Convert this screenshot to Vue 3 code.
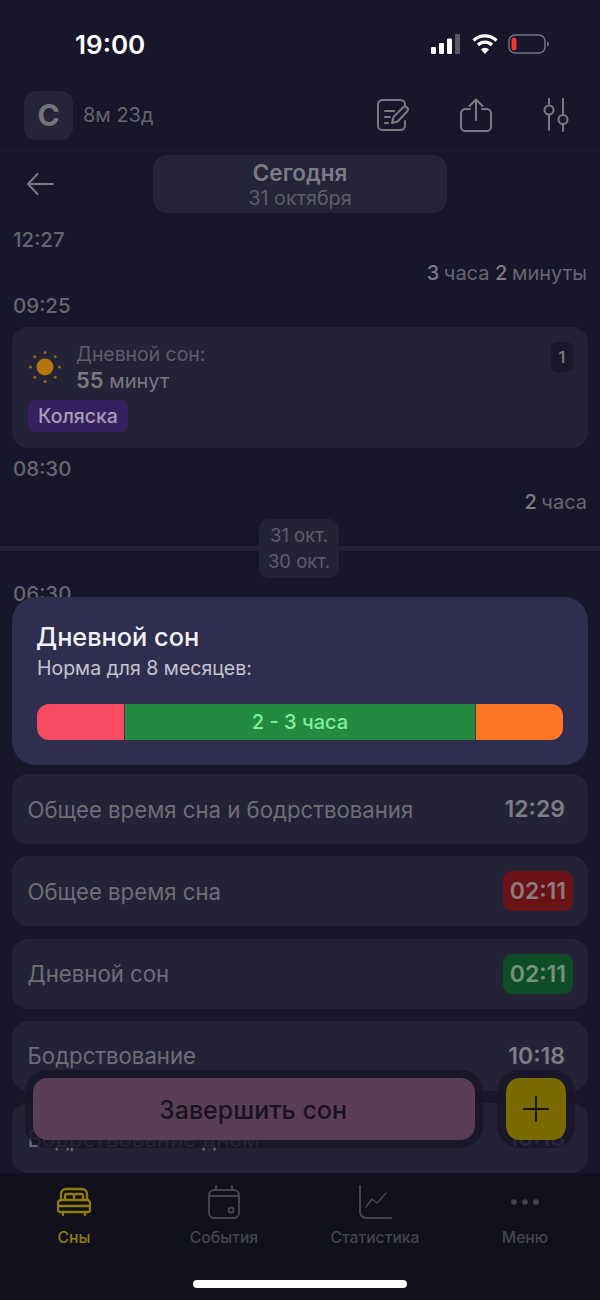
<template>
  <div class="screen">
    <div class="status-bar">
      <span class="clock">19:00</span>
      <div class="status-icons">
        <svg width="32" height="20" viewBox="0 0 32 20">
          <rect x="1" y="13" width="5" height="7" rx="1.2" fill="#fff" />
          <rect x="9" y="9" width="5" height="11" rx="1.2" fill="#fff" />
          <rect x="17" y="4.5" width="5" height="15.5" rx="1.2" fill="#fff" />
          <rect x="25" y="0" width="5" height="20" rx="1.2" fill="#5a5a64" />
        </svg>
        <svg width="26" height="20" viewBox="0 0 26 20">
          <path d="M1.5 6.5a16.5 16.5 0 0 1 23 0" fill="none" stroke="#fff" stroke-width="3.2" />
          <path d="M6 11a10 10 0 0 1 14 0" fill="none" stroke="#fff" stroke-width="3.2" />
          <path d="M13 20l-4-4.6a5.6 5.6 0 0 1 8 0z" fill="#fff" />
        </svg>
        <svg width="42" height="20" viewBox="0 0 42 20">
          <rect x="1" y="1" width="36" height="18" rx="6" fill="none" stroke="#77767f" stroke-width="1.4" />
          <rect x="3.5" y="3.5" width="5" height="13" rx="2.5" fill="#f0352b" />
          <path d="M39 7.5c1.4.4 2 1.300 2 2.500s-.6 2.100-2 2.500z" fill="#77767f" />
        </svg>
      </div>
    </div>

    <header class="top-bar">
      <div class="child">
        <div class="avatar">С</div>
        <span class="age">8м 23д</span>
      </div>
      <div class="actions">
        <svg width="34" height="34" viewBox="0 0 34 34" fill="none" stroke="#7b7a83" stroke-width="2" stroke-linecap="round" stroke-linejoin="round">
          <path d="M29 8V6.500A4.500 4.500 0 0 0 24.500 2H6.500A4.500 4.500 0 0 0 2 6.500v21A4.500 4.500 0 0 0 6.500 32h18a4.500 4.500 0 0 0 4.500-4.500V23" />
          <path d="M9 13h9M9 19h5M9 25h3" />
          <path d="M16 25l1.500-6L27 9.500a2.800 2.800 0 0 1 4 4L21.700 23.500z" />
        </svg>
        <svg width="34" height="34" viewBox="0 0 34 34" fill="none" stroke="#7b7a83" stroke-width="2" stroke-linecap="round" stroke-linejoin="round">
          <path d="M11 11H6.500A4.500 4.500 0 0 0 2 15.500v13A4.500 4.500 0 0 0 6.500 33h21a4.500 4.500 0 0 0 4.500-4.500v-13a4.500 4.500 0 0 0-4.500-4.500H23" />
          <path d="M17 22V1.500M10.500 8L17 1.500 23.500 8" />
        </svg>
        <svg width="28" height="34" viewBox="0 0 28 34" fill="none" stroke="#7b7a83" stroke-width="2" stroke-linecap="round">
          <path d="M7 1v5M7 17v15M21 1v15M21 27v6" />
          <circle cx="7" cy="12" r="4.500" />
          <circle cx="21" cy="21.500" r="4.500" />
        </svg>
      </div>
    </header>

    <main class="content">
      <div class="date-row">
        <svg class="back" width="30" height="24" viewBox="0 0 30 24" fill="none" stroke="#7b7a83" stroke-width="2" stroke-linecap="round" stroke-linejoin="round">
          <path d="M27 12H2M11.500 2L2 12l9.500 10" />
        </svg>
        <div class="date-pill">
          <div class="date-title">Сегодня</div>
          <div class="date-sub">31 октября</div>
        </div>
      </div>

      <div class="timeline">
        <div class="time">12:27</div>
        <div class="gap-label"><b>3</b> часа <b>2</b> минуты</div>
        <div class="time">09:25</div>
        <div class="sleep-card">
          <div class="sleep-top">
            <svg width="34" height="34" viewBox="0 0 34 34">
              <circle cx="17" cy="17" r="8.500" fill="#b5760f" />
              <g fill="#8f6414">
                <circle cx="17" cy="2.500" r="1.500" />
                <circle cx="17" cy="31.500" r="1.500" />
                <circle cx="2.500" cy="17" r="1.500" />
                <circle cx="31.500" cy="17" r="1.500" />
                <circle cx="6.800" cy="6.800" r="1.500" />
                <circle cx="27.200" cy="6.800" r="1.500" />
                <circle cx="6.800" cy="27.200" r="1.500" />
                <circle cx="27.200" cy="27.200" r="1.500" />
              </g>
            </svg>
            <div class="sleep-text">
              <div class="sleep-label">Дневной сон:</div>
              <div class="sleep-value"><b>55</b> минут</div>
            </div>
            <div class="count">1</div>
          </div>
          <span class="tag">Коляска</span>
        </div>
        <div class="time">08:30</div>
        <div class="gap-label"><b>2</b> часа</div>
      </div>

      <div class="day-split">
        <div class="day-pill">
          <div>31 окт.</div>
          <div>30 окт.</div>
        </div>
      </div>

      <div class="timeline">
        <div class="time">06:30</div>
      </div>

      <div class="stats">
        <div v-for="row in stats" :key="row.label" class="stat-row">
          <span class="stat-label">{{ row.label }}</span>
          <span class="stat-value" :class="row.tone">{{ row.value }}</span>
        </div>
      </div>
    </main>

    <nav class="tabs">
      <div class="tab active">
        <svg width="34" height="30" viewBox="0 0 34 30" fill="none" stroke="currentColor" stroke-width="2.300" stroke-linecap="round" stroke-linejoin="round">
          <path d="M4 13V7a5 5 0 0 1 5-5h16a5 5 0 0 1 5 5v6" />
          <path d="M8 13V9a2 2 0 0 1 2-2h5a2 2 0 0 1 2 2 2 2 0 0 1 2-2h5a2 2 0 0 1 2 2v4M17 9v4" />
          <path d="M4 13h26a3 3 0 0 1 3 3v7a2 2 0 0 1-2 2H3a2 2 0 0 1-2-2v-7a3 3 0 0 1 3-3zM1 19h32M6 25v3M28 25v3" />
        </svg>
        <span>Сны</span>
      </div>
      <div class="tab">
        <svg width="34" height="34" viewBox="0 0 34 34" fill="none" stroke="currentColor" stroke-width="2" stroke-linecap="round">
          <path d="M7 5h20a5 5 0 0 1 5 5v18a5 5 0 0 1-5 5H7a5 5 0 0 1-5-5V10a5 5 0 0 1 5-5zM2 11h30M9 1v4M25 1v4" />
          <circle cx="24" cy="25" r="2.500" />
        </svg>
        <span>События</span>
      </div>
      <div class="tab">
        <svg width="34" height="34" viewBox="0 0 34 34" fill="none" stroke="currentColor" stroke-width="2" stroke-linecap="round" stroke-linejoin="round">
          <path d="M2 1v26a6 6 0 0 0 6 6h25" />
          <path d="M8 22l6-8 5 4 9-10" stroke-width="1.600" />
        </svg>
        <span>Статистика</span>
      </div>
      <div class="tab">
        <svg width="34" height="34" viewBox="0 0 34 34" fill="currentColor">
          <circle cx="6" cy="17" r="2.800" />
          <circle cx="17" cy="17" r="2.800" />
          <circle cx="28" cy="17" r="2.800" />
        </svg>
        <span>Меню</span>
      </div>
      <div class="home-bar"></div>
    </nav>

    <div class="norm-popup">
      <div class="norm-title">Дневной сон</div>
      <div class="norm-sub">Норма для 8 месяцев:</div>
      <div class="norm-bar">
        <div class="seg low"></div>
        <div class="seg ok">2 - 3 часа</div>
        <div class="seg high"></div>
      </div>
    </div>

    <div class="fab-row">
      <button class="finish">Завершить сон</button>
      <button class="add">
        <svg width="26" height="26" viewBox="0 0 26 26" stroke="#17151f" stroke-width="2" stroke-linecap="round">
          <path d="M13 1v24M1 13h24" />
        </svg>
      </button>
    </div>
  </div>
</template>

<script setup>
const stats = [
  { label: 'Общее время сна и бодрствования', value: '12:29', tone: '' },
  { label: 'Общее время сна', value: '02:11', tone: 'bad' },
  { label: 'Дневной сон', value: '02:11', tone: 'good' },
  { label: 'Бодрствование', value: '10:18', tone: '' },
  { label: 'Бодрствование днем', value: '10:18', tone: '' },
]
</script>

<style>
html,
body {
  margin: 0;
  background: #17162a;
}
</style>

<style scoped>
.screen {
  position: relative;
  width: 600px;
  height: 1300px;
  display: flex;
  flex-direction: column;
  overflow: hidden;
  background: #17162a;
  color: #7b7a83;
  font-family: Inter, "Noto Sans", sans-serif;
}

.status-bar {
  flex: none;
  height: 88px;
  display: flex;
  justify-content: space-between;
  align-items: center;
  box-sizing: border-box;
  padding: 0 50px 0 75px;
}

.clock {
  color: #fff;
  font-size: 26px;
  font-weight: 600;
}

.status-icons {
  display: flex;
  align-items: center;
  gap: 10px;
}

.top-bar {
  flex: none;
  height: 63px;
  box-sizing: border-box;
  display: flex;
  justify-content: space-between;
  align-items: center;
  padding: 0 30px 8px 24px;
  border-bottom: 1px solid #1e1d30;
}

.child {
  display: flex;
  align-items: center;
  gap: 10px;
}

.avatar {
  width: 49px;
  height: 49px;
  border-radius: 12px;
  background: #252438;
  display: flex;
  align-items: center;
  justify-content: center;
  font-size: 30px;
  font-weight: 700;
  color: #75747d;
}

.age {
  font-size: 20px;
  color: #65646e;
}

.actions {
  display: flex;
  align-items: center;
  gap: 49px;
}

.content {
  flex: 1;
  min-height: 0;
  overflow: hidden;
}

.date-row {
  position: relative;
  height: 73px;
  display: flex;
  justify-content: center;
  padding-top: 4px;
  box-sizing: border-box;
}

.back {
  position: absolute;
  left: 26px;
  top: 21px;
}

.date-pill {
  width: 294px;
  height: 58px;
  border-radius: 14px;
  background: #252438;
  text-align: center;
}

.date-title {
  font-size: 22.500px;
  font-weight: 600;
  line-height: 35px;
  color: #7d7c85;
}

.date-sub {
  font-size: 19.800px;
  line-height: 17px;
  color: #5f5e68;
}

.timeline {
  padding: 0 13px;
}

.time {
  height: 33px;
  line-height: 32px;
  font-size: 20.500px;
  font-weight: 500;
  color: #68676f;
}

.gap-label {
  height: 33px;
  line-height: 33px;
  text-align: right;
  font-size: 20px;
  color: #68676f;
}

.gap-label b {
  font-weight: 500;
  letter-spacing: -1px;
  color: #7d7c85;
}

.sleep-card {
  box-sizing: border-box;
  height: 121px;
  margin: 4px -1px 5px;
  padding: 15px 15px 0 16px;
  border-radius: 16px;
  background: #242236;
}

.sleep-top {
  display: flex;
  align-items: flex-start;
  gap: 14px;
}

.sleep-top svg {
  margin-top: 8px;
}

.sleep-text {
  flex: 1;
}

.sleep-label {
  font-size: 19.400px;
  line-height: 25px;
  color: #5f5e68;
}

.sleep-value {
  font-size: 20px;
  line-height: 27px;
  color: #7a7982;
}

.sleep-value b {
  font-size: 22px;
  font-weight: 600;
}

.count {
  width: 22px;
  height: 30px;
  border-radius: 7px;
  background: #191729;
  text-align: center;
  font-size: 16px;
  font-weight: 600;
  line-height: 30px;
}

.tag {
  display: inline-block;
  margin-top: 5px;
  padding: 0 10px;
  height: 32px;
  line-height: 32px;
  border-radius: 8px;
  background: #36205f;
  color: #a79db8;
  font-size: 19.500px;
  font-weight: 500;
}

.day-split {
  position: relative;
  display: flex;
  justify-content: center;
}

.day-split::before {
  content: "";
  position: absolute;
  left: 0;
  right: 0;
  top: 27px;
  height: 5px;
  background: #242236;
}

.day-pill {
  position: relative;
  left: -1px;
  box-sizing: border-box;
  width: 80px;
  height: 59px;
  padding-top: 3px;
  border-radius: 10px;
  background: #242236;
  text-align: center;
  font-size: 18.500px;
  line-height: 26px;
  color: #5f5e68;
}

.stats {
  margin-top: 163px;
  padding: 0 12px;
  display: flex;
  flex-direction: column;
  gap: 12.300px;
}

.stat-row {
  flex: none;
  box-sizing: border-box;
  height: 70px;
  padding: 0 15px 0 15.500px;
  border-radius: 16px;
  background: #242236;
  display: flex;
  justify-content: space-between;
  align-items: center;
}

.stat-label {
  font-size: 22.200px;
  color: #6f6e77;
}

.stat-value {
  padding: 0 8px 0 6px;
  height: 40px;
  line-height: 40px;
  border-radius: 9px;
  font-size: 23px;
  font-weight: 600;
  color: #7d7c85;
}

.stat-value.bad {
  padding: 0 7px;
  background: #6b1217;
  color: #8d7a7e;
}

.stat-value.good {
  padding: 0 7px;
  background: #0f4d27;
  color: #75907d;
}

.tabs {
  position: relative;
  flex: none;
  height: 127px;
  box-sizing: border-box;
  padding-top: 12px;
  background: #11111e;
  display: grid;
  grid-template-columns: 148px 152px 150px 150px;
  color: #45444e;
}

.tab {
  display: flex;
  flex-direction: column;
  align-items: center;
  height: 66px;
  gap: 9px;
  font-size: 15.700px;
  font-weight: 500;
}

.tab svg {
  height: 34px;
}

.tab.active {
  color: #8f7d0d;
}

.home-bar {
  position: absolute;
  left: 193px;
  bottom: 12px;
  width: 214px;
  height: 8px;
  border-radius: 4px;
  background: #fff;
}

.norm-popup {
  position: absolute;
  left: 12px;
  top: 597px;
  width: 576px;
  height: 168px;
  box-sizing: border-box;
  padding: 24px 25px 0 25px;
  border-radius: 24px;
  background: #302e4e;
}

.norm-title {
  margin-left: -1px;
  font-size: 25.300px;
  font-weight: 500;
  line-height: 32px;
  color: #f2f2f7;
}

.norm-sub {
  font-size: 19.500px;
  line-height: 30px;
  color: #c5c4d1;
}

.norm-bar {
  margin-top: 21px;
  height: 36px;
  border-radius: 12px;
  overflow: hidden;
  display: flex;
  gap: 1px;
  background: #3c3a44;
}

.seg {
  display: flex;
  align-items: center;
  justify-content: center;
}

.seg.low {
  width: 87px;
  background: #f74b62;
}

.seg.ok {
  flex: 1;
  background: #238a40;
  color: #7df09b;
  font-size: 20px;
  font-weight: 500;
}

.seg.high {
  width: 87px;
  background: #ff7726;
}

.fab-row {
  position: absolute;
  left: 25px;
  top: 1070px;
  width: 550px;
  display: flex;
  justify-content: space-between;
}

.finish,
.add {
  box-sizing: border-box;
  height: 78px;
  border: 8px solid rgba(23, 21, 40, 0.82);
  border-radius: 22px;
  background-clip: padding-box;
  font-family: inherit;
  padding: 0;
}

.finish {
  width: 458px;
  padding-top: 2px;
  padding-right: 2px;
  background-color: #5a3d59;
  color: #191222;
  font-size: 25px;
  font-weight: 500;
}

.add {
  width: 78px;
  background-color: #7a6a00;
  display: flex;
  align-items: center;
  justify-content: center;
  border-width: 8px 9px;
}
</style>
